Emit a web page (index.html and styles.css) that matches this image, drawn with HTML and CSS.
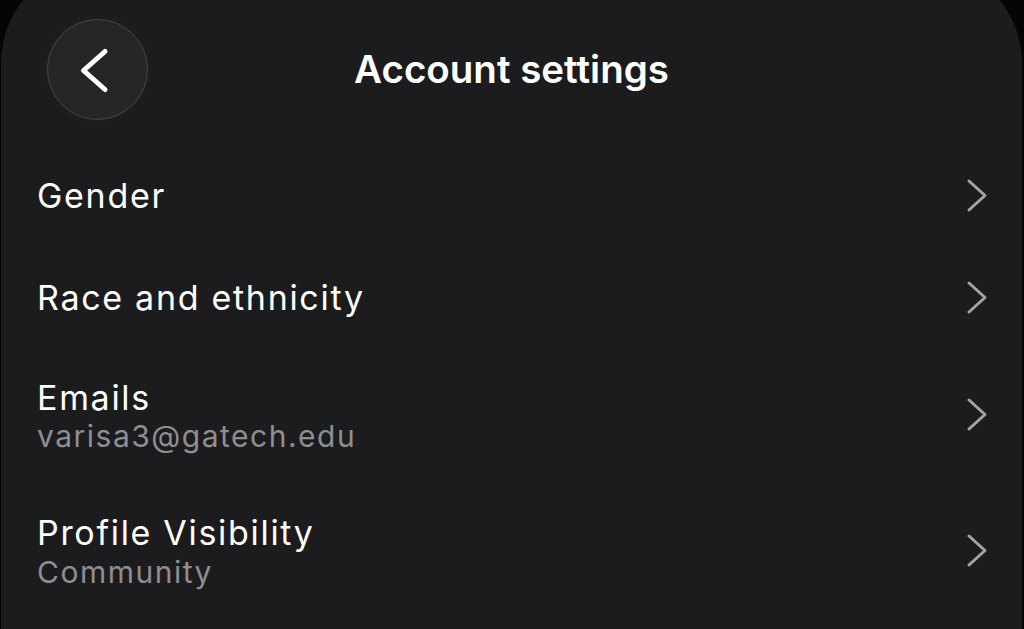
FILE: index.html
```html
<!DOCTYPE html>
<html lang="en">
<head>
<meta charset="utf-8">
<title>Account settings</title>
<link rel="stylesheet" href="styles.css">
</head>
<body>
<div class="panel">
  <header class="header">
    <button class="back" aria-label="Back">
      <svg width="101" height="101" viewBox="0 0 101 101" aria-hidden="true">
        <polyline points="58,32.5 36.5,51.5 58,70.5" fill="none" stroke="#ffffff" stroke-width="5" stroke-linecap="round" stroke-linejoin="round"/>
      </svg>
    </button>
    <h1 class="title">Account settings</h1>
    <span class="spacer"></span>
  </header>
  <ul class="list">
    <li class="row">
      <div class="text"><div class="label">Gender</div></div>
      <svg class="chev" width="22" height="35" viewBox="0 0 22 35" aria-hidden="true"><polyline points="3,3 19,17.5 3,32" fill="none" stroke="#a3a3a8" stroke-width="3" stroke-linecap="round" stroke-linejoin="round"/></svg>
    </li>
    <li class="row">
      <div class="text"><div class="label">Race and ethnicity</div></div>
      <svg class="chev" width="22" height="35" viewBox="0 0 22 35" aria-hidden="true"><polyline points="3,3 19,17.5 3,32" fill="none" stroke="#a3a3a8" stroke-width="3" stroke-linecap="round" stroke-linejoin="round"/></svg>
    </li>
    <li class="row two">
      <div class="text"><div class="label">Emails</div><div class="sub">varisa3@gatech.edu</div></div>
      <svg class="chev" width="22" height="35" viewBox="0 0 22 35" aria-hidden="true"><polyline points="3,3 19,17.5 3,32" fill="none" stroke="#a3a3a8" stroke-width="3" stroke-linecap="round" stroke-linejoin="round"/></svg>
    </li>
    <li class="row two">
      <div class="text"><div class="label">Profile Visibility</div><div class="sub">Community</div></div>
      <svg class="chev" width="22" height="35" viewBox="0 0 22 35" aria-hidden="true"><polyline points="3,3 19,17.5 3,32" fill="none" stroke="#a3a3a8" stroke-width="3" stroke-linecap="round" stroke-linejoin="round"/></svg>
    </li>
  </ul>
</div>
</body>
</html>
```
FILE: styles.css
```css
* { box-sizing: border-box; }
html, body {
  margin: 0;
  padding: 0;
  background: #050505;
  overflow: hidden;
  height: 629px;
}
body {
  font-family: Inter, "Noto Sans", "Liberation Sans", sans-serif;
  color: #ffffff;
}
.panel {
  margin: -37px 2px 0 1px;
  padding-top: 37px;
  height: 666px;
  background: #1c1c1e;
  border-radius: 100px 100px 0 0;
  overflow: hidden;
}
.header {
  height: 143.5px;
  display: grid;
  grid-template-columns: 1fr auto 1fr;
  align-items: start;
}
.back {
  margin: 18.5px 0 0 46px;
  width: 101px;
  height: 101px;
  padding: 0;
  border-radius: 50%;
  border: 1.5px solid #47474b;
  background: #262628;
  display: flex;
  align-items: center;
  justify-content: center;
  box-shadow: 0 0 40px rgba(255, 255, 255, 0.025);
}
.back svg { display: block; margin: -1.5px; }
.title {
  margin: 0;
  padding-top: 46px;
  font-size: 38.5px;
  line-height: 46px;
  font-weight: 600;
  text-align: center;
}
.list {
  list-style: none;
  margin: 0;
  padding: 0;
}
.row {
  display: flex;
  align-items: center;
  justify-content: space-between;
  padding: 31px 34px 30.5px 36px;
}
.row.two { padding-top: 28px; padding-bottom: 31px; }
.text { display: flex; flex-direction: column; }
.label {
  font-size: 34px;
  line-height: 41px;
  font-weight: 400;
  letter-spacing: 1.7px;
  color: #ffffff;
}
.sub {
  font-size: 30px;
  line-height: 34px;
  margin-top: 1.5px;
  letter-spacing: 1.5px;
  color: #8e8e93;
}
.chev { display: block; flex: none; }
```
